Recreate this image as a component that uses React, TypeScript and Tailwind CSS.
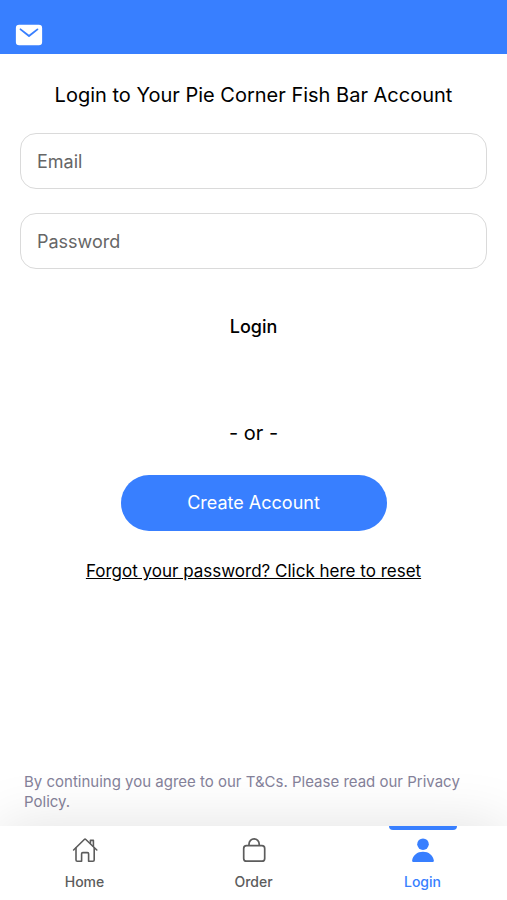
import { useState } from 'react';
import type { ComponentType, FormEvent } from 'react';
import { IoMail } from 'react-icons/io5';

type Tab = {
  name: string;
  icon: ComponentType<{ className?: string }>;
};

function HomeIcon({ className }: { className?: string }) {
  return (
    <svg
      viewBox="0 0 28 28"
      fill="none"
      stroke="currentColor"
      strokeWidth="1.6"
      strokeLinecap="round"
      strokeLinejoin="round"
      className={className}
      aria-hidden="true"
    >
      <path d="M2.6 14 13.3 3.5a1.1 1.1 0 0 1 1.500 0L25.800 14" />
      <path d="M5 12v12a1.200 1.200 0 0 0 1.200 1.200h4.400v-7.400a1.200 1.200 0 0 1 1.200-1.200h4.600a1.200 1.200 0 0 1 1.200 1.200v7.400h4.400a1.200 1.200 0 0 0 1.200-1.200V12" />
      <path d="M19.400 7.600V4.400h3v6" />
    </svg>
  );
}

function BagIcon({ className }: { className?: string }) {
  return (
    <svg viewBox="0 0 28 28" fill="none" stroke="currentColor" strokeWidth="1.7" className={className} aria-hidden="true">
      <rect x="3.7" y="9.6" width="21" height="15.6" rx="2.8" />
      <path d="M9 9.4V8a5.1 5.1 0 0 1 10.2 0v1.4" />
    </svg>
  );
}

function PersonIcon({ className }: { className?: string }) {
  return (
    <svg viewBox="0 0 28 28" fill="currentColor" className={className} aria-hidden="true">
      <circle cx="14" cy="8.2" r="5.8" />
      <path d="M4.2 26c-.8 0-1.2-.5-1.1-1.2C3.8 19 8.4 15.7 14 15.7S24.2 19 24.9 24.8c.1.7-.3 1.2-1.1 1.2Z" />
    </svg>
  );
}

const tabs: Tab[] = [
  { name: 'Home', icon: HomeIcon },
  { name: 'Order', icon: BagIcon },
  { name: 'Login', icon: PersonIcon },
];

const inputClass =
  'block h-14 w-full rounded-2xl border border-[#dadada] bg-white px-4 text-lg text-black placeholder:text-[#666666] focus:border-[#387fff] focus:outline-none';

function TabBar() {
  return (
    <nav className="grid grid-cols-3 bg-white pb-2 shadow-[0_0_60px_rgba(0,0,0,0.12)]">
      {tabs.map(({ name, icon: Icon }) => {
        const active = name === 'Login';

        return (
          <a
            key={name}
            href={`#${name.toLowerCase()}`}
            aria-current={active ? 'page' : undefined}
            className={`flex flex-col items-center text-sm font-medium ${active ? 'text-[#387fff]' : 'text-[#5c5c5c]'}`}
          >
            <span className={`h-1 w-17 rounded-b-sm ${active ? 'bg-[#387fff]' : ''}`} />
            <Icon className="mt-1.5 size-7" />
            <span className="mt-2">{name}</span>
          </a>
        );
      })}
    </nav>
  );
}

export default function App() {
  const [email, setEmail] = useState('');
  const [password, setPassword] = useState('');

  const onSubmit = (e: FormEvent) => {
    e.preventDefault();
  };

  return (
    <div className="flex min-h-screen flex-col bg-white font-['Inter',sans-serif] text-black">
      <header className="bg-[#387fff] px-3.5 pt-5 pb-1">
        <button type="button" aria-label="Messages" className="block text-white">
          <IoMail className="size-7.5" />
        </button>
      </header>

      <main className="flex flex-1 flex-col px-5">
        <h1 className="mt-6 text-center text-xl leading-8.5">Login to Your Pie Corner Fish Bar Account</h1>

        <form onSubmit={onSubmit} className="mt-[21px] flex flex-col items-center">
          <input
            id="email"
            type="email"
            aria-label="Email"
            className={inputClass}
            placeholder="Email"
            value={email}
            onChange={(e) => setEmail(e.target.value)}
          />
          <input
            id="password"
            type="password"
            aria-label="Password"
            className={`mt-6 ${inputClass}`}
            placeholder="Password"
            value={password}
            onChange={(e) => setPassword(e.target.value)}
          />
          <button type="submit" className="mt-7.5 h-14 px-10 text-lg font-medium">
            Login
          </button>
        </form>

        <div className="mt-16 flex flex-col items-center">
          <p className="text-xl">- or -</p>
          <button type="button" className="mt-7 h-14 w-66.5 rounded-full bg-[#387fff] text-lg text-white">
            Create Account
          </button>
          <a href="#reset" className="mt-7 text-[17px] leading-6 underline">
            Forgot your password? Click here to reset
          </a>
        </div>

        <p className="mt-auto px-1 pb-3.5 text-[15px] leading-5 text-[#85829a]">
          By continuing you agree to our T&amp;Cs. Please read our Privacy Policy.
        </p>
      </main>

      <TabBar />
    </div>
  );
}
